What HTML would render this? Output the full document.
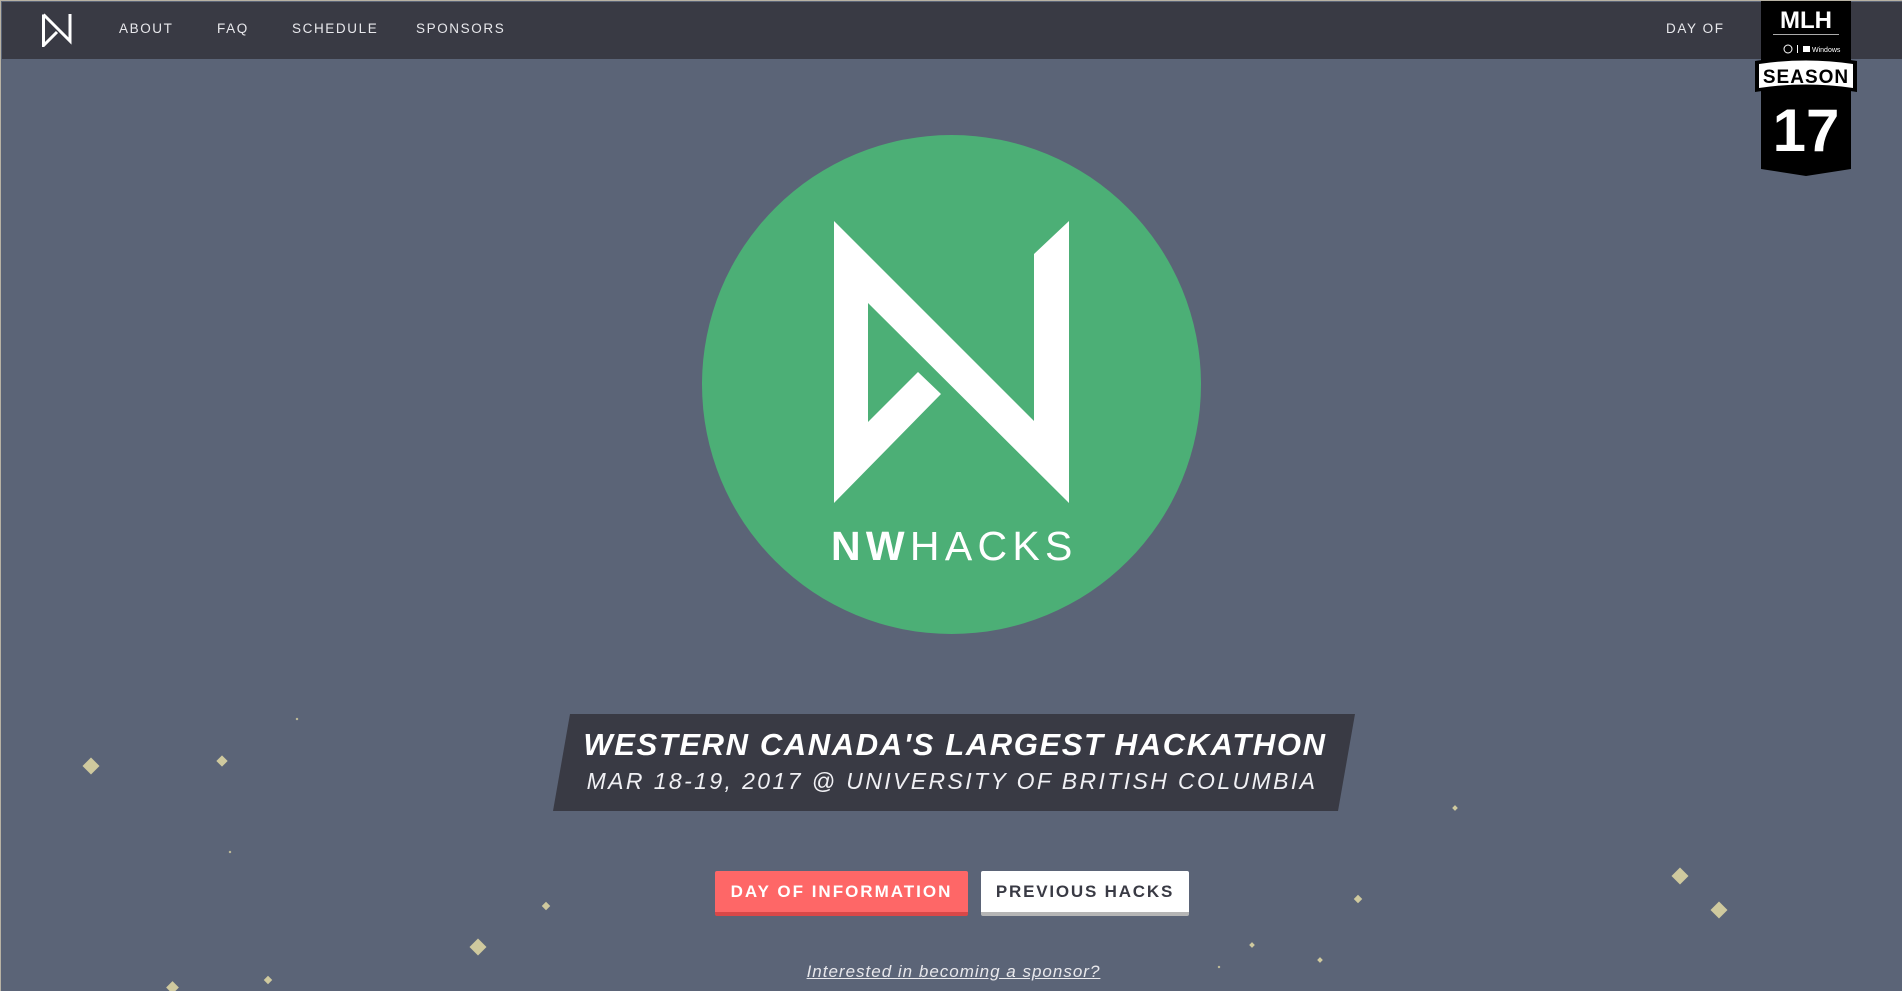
<!DOCTYPE html>
<html><head><meta charset="utf-8"><style>
*{margin:0;padding:0;box-sizing:border-box}
html,body{width:1902px;height:991px;overflow:hidden}
body{background:#5b6477;font-family:"Liberation Sans",sans-serif;position:relative;border-left:1px solid #b8b2a4;border-top:1px solid #b8b2a4}
.nav{position:absolute;left:1px;top:1px;width:1901px;height:57px;background:#393a44}
.nav a{position:absolute;top:19px;color:#e8e8ec;font-size:13.5px;letter-spacing:1.6px;text-decoration:none}
.star{position:absolute;background:#cfc99e;transform:rotate(45deg)}
.banner{position:absolute;left:552px;top:713px;width:802px;height:97px;background:#393a44;clip-path:polygon(17px 0,802px 0,785px 97px,0 97px)}
.t1{position:absolute;left:0;width:1902px;top:726px;text-align:center;color:#fff;font-weight:bold;font-style:italic;font-size:31px;letter-spacing:1.6px;padding-left:6px}
.t2{position:absolute;left:0;width:1902px;top:767px;text-align:center;color:#f0f0f4;font-style:italic;font-size:23px;letter-spacing:2.4px;font-weight:300}
.btn{position:absolute;top:870px;height:45px;font-weight:bold;font-size:17px;letter-spacing:2px;text-align:center;line-height:41px;border-radius:2px}
</style></head><body>
<div class="nav">
<svg style="position:absolute;left:40px;top:11px" width="30" height="34" viewBox="0 0 30 34"><path d="M1.5 1.5 L28 28 V1 M1.5 1.5 V32.5 L15 19" fill="none" stroke="#fff" stroke-width="3"/></svg>
<a style="left:117px">ABOUT</a><a style="left:215px">FAQ</a><a style="left:290px">SCHEDULE</a><a style="left:414px">SPONSORS</a><a style="left:1664px">DAY OF</a>
</div>
<svg style="position:absolute;left:1754px;top:0" width="102" height="176" viewBox="0 0 102 176">
<path d="M6 0 H96 V168 L51 175 L6 168 Z" fill="#000"/>
<text x="51" y="27" fill="#fff" font-family="Liberation Sans" font-weight="bold" font-size="24" text-anchor="middle">MLH</text>
<rect x="18" y="33" width="66" height="1" fill="#aaa"/>
<circle cx="33" cy="48" r="4" fill="none" stroke="#fff"/><rect x="42" y="44" width="1" height="8" fill="#fff"/>
<rect x="48" y="45" width="7" height="6" fill="#fff"/><text x="57" y="51" fill="#fff" font-size="7" font-family="Liberation Sans">Windows</text>
<path d="M0 60 Q51 52 102 60 V91 Q51 83 0 91 Z" fill="#000"/>
<path d="M4 63 Q51 56 98 63 V87 Q51 80 4 87 Z" fill="#fff"/>
<text x="51" y="82" fill="#000" font-family="Liberation Sans" font-weight="bold" font-size="19" text-anchor="middle" letter-spacing="1">SEASON</text>
<text x="51" y="150" fill="#fff" font-family="Liberation Sans" font-weight="bold" font-size="60" text-anchor="middle">17</text>
</svg>
<div style="position:absolute;left:701px;top:134px;width:499px;height:499px;border-radius:50%;background:#4caf76"></div>
<svg style="position:absolute;left:833px;top:220px" width="236" height="283" viewBox="0 0 236 283">
<path d="M0 0 L200 200 V33 L235 0 V282 L34 82 V201 L84 151 L107 173 L0 282 Z" fill="#fff"/>
</svg>
<div style="position:absolute;left:830px;top:522px;color:#fff;font-size:41px;letter-spacing:5.3px;white-space:nowrap"><b>NW</b>HACKS</div>
<div class="banner"></div>
<div class="t1">WESTERN CANADA'S LARGEST HACKATHON</div>
<div class="t2">MAR 18-19, 2017 @ UNIVERSITY OF BRITISH COLUMBIA</div>
<div class="btn" style="left:714px;width:253px;background:#fe6767;color:#fff;border-bottom:4px solid #d94848">DAY OF INFORMATION</div>
<div class="btn" style="left:980px;width:208px;background:#fff;color:#393a44;border-bottom:4px solid #b5b5b5;letter-spacing:1.8px">PREVIOUS HACKS</div>
<div style="position:absolute;left:804px;top:961px;width:297px;text-align:center;color:#e8e8ec;font-style:italic;font-size:17px;letter-spacing:1px;text-decoration:underline;white-space:nowrap">Interested in becoming a sponsor?</div>
<div class="star" style="left:84px;top:759px;width:12px;height:12px"></div>
<div class="star" style="left:217px;top:756px;width:8px;height:8px"></div>
<div class="star" style="left:295px;top:717px;width:2px;height:2px"></div>
<div class="star" style="left:228px;top:850px;width:2px;height:2px"></div>
<div class="star" style="left:542px;top:902px;width:6px;height:6px"></div>
<div class="star" style="left:471px;top:940px;width:12px;height:12px"></div>
<div class="star" style="left:264px;top:976px;width:6px;height:6px"></div>
<div class="star" style="left:167px;top:982px;width:9px;height:9px"></div>
<div class="star" style="left:1452px;top:805px;width:4px;height:4px"></div>
<div class="star" style="left:1354px;top:895px;width:6px;height:6px"></div>
<div class="star" style="left:1249px;top:942px;width:4px;height:4px"></div>
<div class="star" style="left:1217px;top:965px;width:2px;height:2px"></div>
<div class="star" style="left:1317px;top:957px;width:4px;height:4px"></div>
<div class="star" style="left:1673px;top:869px;width:12px;height:12px"></div>
<div class="star" style="left:1712px;top:903px;width:12px;height:12px"></div>
</body></html>
